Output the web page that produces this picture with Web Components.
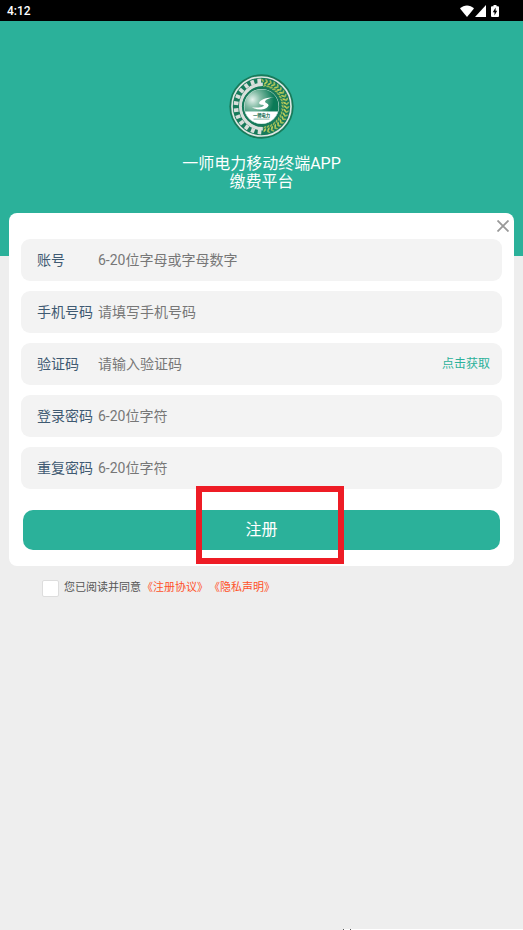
<!DOCTYPE html>
<html lang="zh-CN">
<head>
  <meta charset="UTF-8">
  <meta name="viewport" content="width=device-width, initial-scale=1.0">
  <title>注册</title>
  <style>
    body {
      --main: #2bb19a;
      margin: 0;
      min-height: 100vh;
      background: #eee;
      font-family: Roboto, "Noto Sans CJK SC", sans-serif;
      font-size: 14px;
    }
  </style>
</head>
<body>
  <status-bar time="4:12"></status-bar>
  <app-header>
    <span>一师电力移动终端APP</span>
    <span>缴费平台</span>
  </app-header>
  <register-card>
    <form-field label="账号" placeholder="6-20位字母或字母数字"></form-field>
    <form-field label="手机号码" type="tel" placeholder="请填写手机号码"></form-field>
    <form-field label="验证码" placeholder="请输入验证码">
      <code-button>点击获取</code-button>
    </form-field>
    <form-field label="登录密码" type="password" placeholder="6-20位字符"></form-field>
    <form-field label="重复密码" type="password" placeholder="6-20位字符"></form-field>
    <submit-button slot="footer">注册</submit-button>
  </register-card>
  <agree-terms></agree-terms>
  <bottom-strip></bottom-strip>
</body>

<script>
  // 公共基类：把 html 放入 shadowRoot
  class BaseElement extends HTMLElement {
    connectedCallback() {
      if (this.shadowRoot) return
      const root = this.attachShadow({ mode: 'open' })
      const template = document.createElement('template')
      template.innerHTML = this.render()
      root.appendChild(template.content.cloneNode(true))
    }
  }

  class StatusBar extends BaseElement {
    render() {
      return `
        <style>
          :host {
            display: flex;
            align-items: center;
            justify-content: space-between;
            height: 21px;
            padding: 0 24px 0 7px;
            background: #000;
            color: #fff;
            font-size: 12px;
            font-weight: 500;
          }
          div { display: flex; align-items: center; }
          svg { display: block; fill: #fff; }
          .signal { margin: 0 5px 0 1px; }
        </style>
        <time>${this.getAttribute('time')}</time>
        <div>
          <svg width="14" height="12" viewBox="0 0 14 12"><path d="M0 3.6C4-.7 10-.7 14 3.6L7 12z"/></svg>
          <svg class="signal" width="11" height="12" viewBox="0 0 11 12"><path d="M11 0v12H0z"/></svg>
          <svg width="8" height="12" viewBox="0 0 8 12">
            <path d="M2.5 0h3v1.2H7q1 0 1 1V11q0 1-1 1H1q-1 0-1-1V2.2q0-1 1-1h1.5z"/>
            <path fill="#000" d="M4.6 2.6 1.8 7.2h1.7v3.2l2.7-4.6H4.6z"/>
          </svg>
        </div>
      `
    }
  }

  class AppLogo extends BaseElement {
    // 左半圈齿轮
    teeth() {
      let str = ''
      for (let i = 0; i < 12; i++) {
        str += `<path d="M-7-70v-14h11v14z" transform="rotate(${-4 - i * 15.5})"/>`
      }
      return str
    }

    // 右半圈麦穗
    wheat() {
      let str = ''
      for (let i = 0; i < 19; i++) {
        str += `<g transform="rotate(${6 + i * 9})">
          <path d="M0-66q9-2 10-11-10 2-10 11z"/>
          <path d="M0-74q-1-9-10-10 1 9 10 10z" opacity=".8"/>
          <path d="M-2-60q9 0 11-6-10-2-11 6z" opacity=".8"/>
        </g>`
      }
      return str
    }

    render() {
      return `
        <style>
          :host { display: block; }
          svg { display: block; }
          text { font: 700 13px "Noto Sans CJK SC", sans-serif; }
        </style>
        <svg width="65" height="65" viewBox="-98 -98 196 196">
          <defs>
            <radialGradient id="ball" cx="24%" cy="30%" r="62%">
              <stop offset="0" stop-color="#e4f2ec"/>
              <stop offset=".4" stop-color="#7fb9a2"/>
              <stop offset="1" stop-color="#0b7a57"/>
            </radialGradient>
            <clipPath id="inner"><circle r="52"/></clipPath>
          </defs>
          <circle r="97" fill="#177a5a"/>
          <circle r="89" fill="#177a5a" stroke="#dfe6e2" stroke-width="5"/>
          <path d="M4-67A67 67 0 1 0 4 67" fill="none" stroke="#d9dfdb" stroke-width="10"/>
          <g fill="#d9dfdb">${this.teeth()}</g>
          <g fill="#bccb5a">${this.wheat()}</g>
          <circle r="59" fill="#177a5a"/>
          <circle r="53" fill="#e9f3ee"/>
          <g clip-path="url(#inner)">
            <rect x="-52" y="-52" width="104" height="104" fill="url(#ball)"/>
            <rect x="-55" y="15" width="110" height="40" fill="#fff"/>
          </g>
          <path fill="#fff" d="M39-28C14-28-8-19-7-10c1 6 21 4 12 9-9 5-22 5-34 3C-14 13 16 11 21-2 23-11 8-10 11-16c3-6 15-10 28-12z"/>
          <text x="0" y="31" text-anchor="middle" fill="#075f43">一师电力</text>
          <path d="M-24 38h48" stroke="#4c9479" stroke-width="2"/>
        </svg>
      `
    }
  }

  class AppHeader extends BaseElement {
    render() {
      return `
        <style>
          :host {
            display: flex;
            flex-direction: column;
            align-items: center;
            padding: 53px 0 65px;
            background: var(--main);
            color: #fff;
          }
          h1 {
            display: flex;
            flex-direction: column;
            align-items: center;
            margin: 16px 0 0;
            font-size: 16px;
            font-weight: 400;
            line-height: 18px;
          }
        </style>
        <app-logo></app-logo>
        <h1><slot></slot></h1>
      `
    }
  }

  class RegisterCard extends BaseElement {
    render() {
      return `
        <style>
          :host {
            display: block;
            position: relative;
            margin: -43px 9px 0;
            padding: 0 12px 16px;
            border-radius: 8px;
            background: #fff;
          }
          header {
            display: flex;
            justify-content: flex-end;
            height: 26px;
            margin-right: -8px;
          }
          .close {
            display: flex;
            align-items: center;
            padding: 0 1px;
            border: 0;
            background: none;
          }
          .fields { display: grid; gap: 10px; }
          footer { padding: 21px 2px 0; }
        </style>
        <header>
          <button class="close" type="button" aria-label="关闭">
            <svg width="12" height="12" viewBox="0 0 12 12" fill="none" stroke="#999" stroke-width="1.8"><path d="M.5.5l11 11M11.5.5l-11 11"/></svg>
          </button>
        </header>
        <div class="fields"><slot></slot></div>
        <footer><slot name="footer"></slot></footer>
      `
    }
  }

  class FormField extends BaseElement {
    render() {
      return `
        <style>
          :host {
            display: flex;
            align-items: center;
            height: 42px;
            padding: 0 12px 0 16px;
            border-radius: 9px;
            background: #f3f3f3;
            line-height: 18px;
          }
          label { flex: 0 0 61px; color: #3f5a72; }
          input {
            flex: 1;
            min-width: 0;
            padding: 0;
            border: 0;
            outline: 0;
            background: none;
            color: #333;
            font: inherit;
          }
          input::placeholder { color: #777; }
        </style>
        <label for="input">${this.getAttribute('label')}</label>
        <input id="input" type="${this.getAttribute('type') || 'text'}" placeholder="${this.getAttribute('placeholder')}">
        <slot></slot>
      `
    }
  }

  class CodeButton extends BaseElement {
    render() {
      return `
        <style>
          :host { display: block; }
          button {
            display: block;
            padding: 0;
            border: 0;
            background: none;
            color: var(--main);
            font: inherit;
            font-size: 12px;
          }
        </style>
        <button type="button"><slot></slot></button>
      `
    }
  }

  class SubmitButton extends BaseElement {
    render() {
      return `
        <style>
          :host { display: block; position: relative; }
          button {
            display: block;
            width: 100%;
            height: 40px;
            padding: 0;
            border: 0;
            border-radius: 10px;
            background: var(--main);
            color: #fff;
            font: inherit;
            font-size: 16px;
            line-height: 18px;
          }
          /* 红色标注框 */
          .mark {
            position: absolute;
            top: -24px;
            left: calc(50% - 66px);
            box-sizing: border-box;
            width: 148px;
            height: 78px;
            border: 6px solid #ee1c25;
            pointer-events: none;
          }
        </style>
        <button type="submit"><slot></slot></button>
        <div class="mark"></div>
      `
    }
  }

  class AgreeTerms extends BaseElement {
    render() {
      return `
        <style>
          :host {
            display: flex;
            align-items: center;
            padding: 13px 42px;
            color: #555;
            font-size: 11px;
            line-height: 18px;
          }
          input {
            appearance: none;
            box-sizing: border-box;
            width: 17px;
            height: 17px;
            margin: 0 5px 0 0;
            border: 1px solid #ddd;
            border-radius: 2px;
            background: #fff;
          }
          input:checked { background: var(--main); }
          a { margin-left: 1px; color: #ff5128; text-decoration: none; }
        </style>
        <input id="agree" type="checkbox">
        <label for="agree">您已阅读并同意</label>
        <a href="#register">《注册协议》</a>
        <a href="#privacy">《隐私声明》</a>
      `
    }
  }

  // 底部露出的白条
  class BottomStrip extends BaseElement {
    render() {
      return `
        <style>
          :host {
            position: fixed;
            right: 0;
            bottom: 0;
            display: flex;
            gap: 6px;
            width: 180px;
            height: 1px;
            background: #fff;
          }
          i { width: 1px; background: #555; }
        </style>
        <i></i><i></i>
      `
    }
  }

  customElements.define('status-bar', StatusBar)
  customElements.define('app-logo', AppLogo)
  customElements.define('app-header', AppHeader)
  customElements.define('register-card', RegisterCard)
  customElements.define('form-field', FormField)
  customElements.define('code-button', CodeButton)
  customElements.define('submit-button', SubmitButton)
  customElements.define('agree-terms', AgreeTerms)
  customElements.define('bottom-strip', BottomStrip)
</script>
</html>
